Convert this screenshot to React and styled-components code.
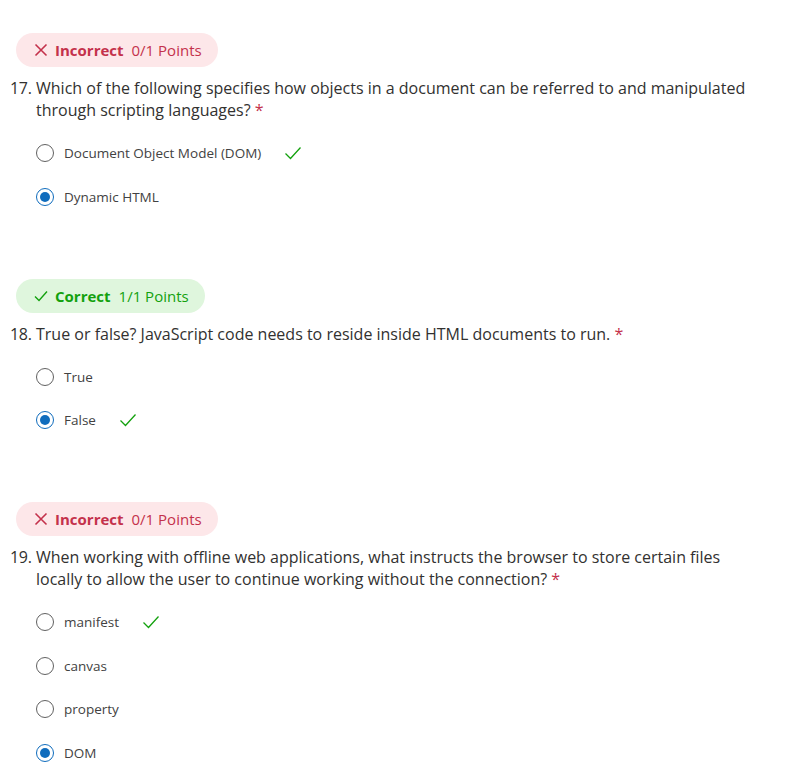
import styled, { createGlobalStyle } from "styled-components"

const GlobalStyle = createGlobalStyle`
    body {
        margin: 0;
        background: #ffffff;
        font-family: "Open Sans", "Noto Sans", sans-serif;
        color: #323130;
    }
`

const Page = styled.div`
    padding: 33px 0 0 10px;
    display: flex;
    flex-direction: column;
    gap: 72px;
`

const Block = styled.section`
    display: flex;
    flex-direction: column;
`

const Badge = styled.div`
    align-self: flex-start;
    margin-left: 6px;
    height: 34px;
    padding: 0 16px 0 18px;
    border-radius: 17px;
    display: flex;
    align-items: center;
    gap: 7px;
    font-size: 15px;
    background: ${p => (p.$ok ? "#dff6dd" : "#fde7e9")};
    color: ${p => (p.$ok ? "#13a10e" : "#c4314b")};
`

const BadgeLabel = styled.span`
    font-weight: 700;
    margin-right: 1px;
`

const Question = styled.div`
    margin-top: 10px;
    display: flex;
    font-size: 16px;
    line-height: 22px;
    color: #323130;
    width: 760px;
`

const Num = styled.span`
    width: 26px;
    flex: none;
    letter-spacing: -0.3px;
`

const QText = styled.div`
    flex: 1;
`

const Req = styled.span`
    color: #c4314b;
`

const Options = styled.div`
    margin-top: 22px;
    display: flex;
    flex-direction: column;
    gap: 23.5px;
`

const Option = styled.div`
    display: flex;
    align-items: center;
    height: 20px;
    padding-left: 26px;
    font-size: 13.5px;
    color: #424242;
`

const Radio = styled.span`
    width: 18px;
    height: 18px;
    box-sizing: border-box;
    border-radius: 50%;
    border: ${p => (p.$on ? "1.5px solid #0f6cbd" : "1px solid #616161")};
    display: flex;
    align-items: center;
    justify-content: center;
    margin-right: 10px;
    &::after {
        content: "";
        display: ${p => (p.$on ? "block" : "none")};
        width: 10px;
        height: 10px;
        border-radius: 50%;
        background: #0f6cbd;
    }
`

const Tick = styled.svg`
    margin-left: 23px;
    width: 18px;
    height: 14px;
`

const Check = ({ color = "#13a10e" }) => (
    <Tick viewBox="0 0 18 14">
        <path d="M1.5 7.5 L6.5 12.5 L16.5 1.5" fill="none" stroke={color} strokeWidth="1.3" />
    </Tick>
)

const IconX = () => (
    <svg width="14" height="14" viewBox="0 0 14 14">
        <path d="M1.5 1.5 L12.5 12.5 M12.5 1.5 L1.5 12.5" stroke="#c4314b" strokeWidth="1.6" />
    </svg>
)

const IconOk = () => (
    <svg width="14" height="12" viewBox="0 0 14 12">
        <path d="M1 6.5 L5 10.5 L13 1.5" fill="none" stroke="#13a10e" strokeWidth="1.4" />
    </svg>
)

const data = [
    {
        ok: false,
        pts: "0/1 Points",
        num: "17.",
        text: "Which of the following specifies how objects in a document can be referred to and manipulated through scripting languages?",
        options: [
            { t: "Document Object Model (DOM)", right: true },
            { t: "Dynamic HTML", on: true },
        ],
    },
    {
        ok: true,
        pts: "1/1 Points",
        num: "18.",
        text: "True or false? JavaScript code needs to reside inside HTML documents to run.",
        options: [
            { t: "True" },
            { t: "False", on: true, right: true },
        ],
    },
    {
        ok: false,
        pts: "0/1 Points",
        num: "19.",
        text: "When working with offline web applications, what instructs the browser to store certain files locally to allow the user to continue working without the connection?",
        options: [
            { t: "manifest", right: true },
            { t: "canvas" },
            { t: "property" },
            { t: "DOM", on: true },
        ],
    },
]

export default function App() {
    return (
        <>
            <GlobalStyle />
            <Page>
                {data.map(q => (
                    <Block key={q.num}>
                        <Badge $ok={q.ok}>
                            {q.ok ? <IconOk /> : <IconX />}
                            <BadgeLabel>{q.ok ? "Correct" : "Incorrect"}</BadgeLabel>
                            <span>{q.pts}</span>
                        </Badge>
                        <Question>
                            <Num>{q.num}</Num>
                            <QText>{q.text}{"\u00a0"}<Req>*</Req></QText>
                        </Question>
                        <Options>
                            {q.options.map(o => (
                                <Option key={o.t}>
                                    <Radio $on={o.on} />
                                    {o.t}
                                    {o.right && <Check />}
                                </Option>
                            ))}
                        </Options>
                    </Block>
                ))}
            </Page>
        </>
    )
}
